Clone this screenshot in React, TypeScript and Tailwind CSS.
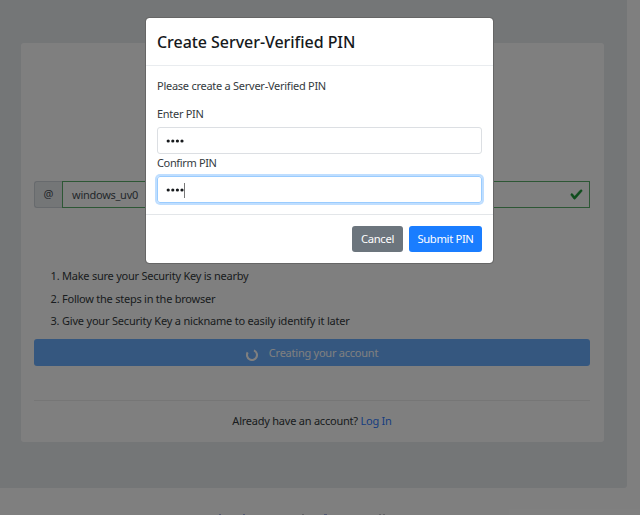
import React from "react";

const font = "font-['Noto_Sans','Open_Sans',sans-serif]";

const steps = [
  { text: "Make sure your Security Key is nearby", tracking: "tracking-[-0.24px]" },
  { text: "Follow the steps in the browser", tracking: "tracking-[-0.24px]" },
  { text: "Give your Security Key a nickname to easily identify it later", tracking: "tracking-[-0.2px]" },
];

function Dots({ caret = false }: { caret?: boolean }) {
  return (
    <span className="flex items-center pt-px">
      <svg viewBox="0 0 18 4" className="h-[4px] w-[18px]">
        {[2.2, 6.8, 11.4, 16].map((cx) => (
          <circle key={cx} cx={cx} cy="2" r="1.6" fill="#16191c" />
        ))}
      </svg>
      {caret && <span className="-my-2 h-[15px] w-px bg-[#777]" />}
    </span>
  );
}

function PinDialog() {
  return (
    <div
      role="dialog"
      className="absolute left-[145px] top-[17px] flex h-[247px] w-[349px] flex-col rounded-[4px] border border-[#666] bg-white bg-clip-padding text-[11px] text-[#343a40]"
    >
      <header className="flex h-[48px] items-center border-b border-[#e9ecef] px-[11px]">
        <h1 className="pt-px text-[16px] font-medium leading-6 tracking-[-0.05px] text-[#16191c]">Create Server-Verified PIN</h1>
      </header>
      <div className="flex h-[149px] flex-col border-b border-[#e3e6e9] px-[11px] pt-[11px]">
        <p className="h-[28px] leading-[17px] tracking-[-0.26px]">Please create a Server-Verified PIN</p>
        <label className="h-[22px] leading-[17px] tracking-[-0.3px]">Enter PIN</label>
        <div className="flex h-[27px] shrink-0 items-center rounded-[3px] border border-[#dcdfe3] px-[8px]">
          <Dots />
        </div>
        <label className="h-[22px] leading-[17px] tracking-[-0.35px]">Confirm PIN</label>
        <div className="flex h-[27px] shrink-0 items-center rounded-[3px] border border-[#9accff] px-[8px] ring-2 ring-[#bfdeff]">
          <Dots caret />
        </div>
      </div>
      <footer className="flex items-start justify-end gap-[6px] px-[11px] pt-[11px] text-white">
        <button className="h-[26px] w-[51px] rounded-[3px] bg-[#6c757d] text-[11.25px] tracking-[-0.3px]">Cancel</button>
        <button className="h-[26px] w-[73px] rounded-[3px] bg-[#1a7dff] text-[11.25px] tracking-[-0.35px]">Submit PIN</button>
      </footer>
    </div>
  );
}

export default function App() {
  return (
    <div className={`relative h-[515px] w-[640px] overflow-hidden bg-white text-[11px] text-[#343a40] ${font}`}>
      <main className="h-[488px] w-[627px] rounded-br-[3px] bg-[#e9ecef] pl-[21px] pt-[43px]">
        <section className="flex h-[399px] w-[583px] flex-col rounded-[3px] bg-white pl-[13px] pr-[14px] pt-[138px]">
          <div className="flex h-[27px] shrink-0">
            <span className="flex w-[28px] items-center justify-center rounded-l-[3px] border border-r-0 border-[#ced4da] bg-[#e9ecef] text-[#495057]">@</span>
            <div className="flex flex-1 items-center justify-between border border-[#5aae6b] pl-[9px] pr-[6px]">
              <span className="pt-px tracking-[-0.27px] text-[#495057]">windows_uv0</span>
              <svg viewBox="0 0 8 8" className="size-[13px]">
                <path fill="#1f9a3a" stroke="#1f9a3a" strokeWidth="0.25" d="M2.3 6.73.6 4.53c-.4-1.04.46-1.4 1.1-.8l1.1 1.4 3.4-3.8c.6-.63 1.6-.27 1.2.7l-4 4.6c-.43.5-.8.4-1.1.1z" />
              </svg>
            </div>
          </div>
          <ol className="mt-[59px] h-[73px] shrink-0 list-decimal pl-[28px]">
            {steps.map((s) => (
              <li key={s.text} className={`h-[22.5px] leading-[17px] ${s.tracking}`}>{s.text}</li>
            ))}
          </ol>
          <div className="-mt-px flex h-[27px] shrink-0 items-center justify-center gap-[11px] rounded-[3px] bg-[#6aaeff] text-white">
            <svg viewBox="0 0 12 12" className="mt-[4px] size-[12px]">
              <path d="M8 1.4A5 5 0 1 1 1.7 3.4" fill="none" stroke="white" strokeWidth="2.1" />
            </svg>
            <span className="pt-px tracking-[-0.24px]">Creating your account</span>
          </div>
          <hr className="mt-[34px] border-[#ededed]" />
          <p className="mt-[11px] text-center leading-[17px] tracking-[-0.23px]">
            Already have an account? <a className="text-[#307bff]">Log In</a>
          </p>
        </section>
      </main>
      <footer aria-hidden="true" className="flex h-[27px] items-end pl-[219px]">
        <span className="h-px w-[2px] bg-[#a5aee0]" />
        <span className="ml-[22px] h-px w-[2px] bg-[#a5aee0]" />
        <span className="ml-[57px] h-px w-[2px] bg-[#c2c2ca]" />
        <span className="ml-[20px] h-px w-[3px] bg-[#a5aee0]" />
        <span className="ml-[52px] h-px w-[2px] bg-[#c2c2ca]" />
        <span className="ml-[2px] h-px w-[2px] bg-[#c2c2ca]" />
      </footer>
      <div className="absolute inset-0 bg-black/50" />
      <PinDialog />
    </div>
  );
}
